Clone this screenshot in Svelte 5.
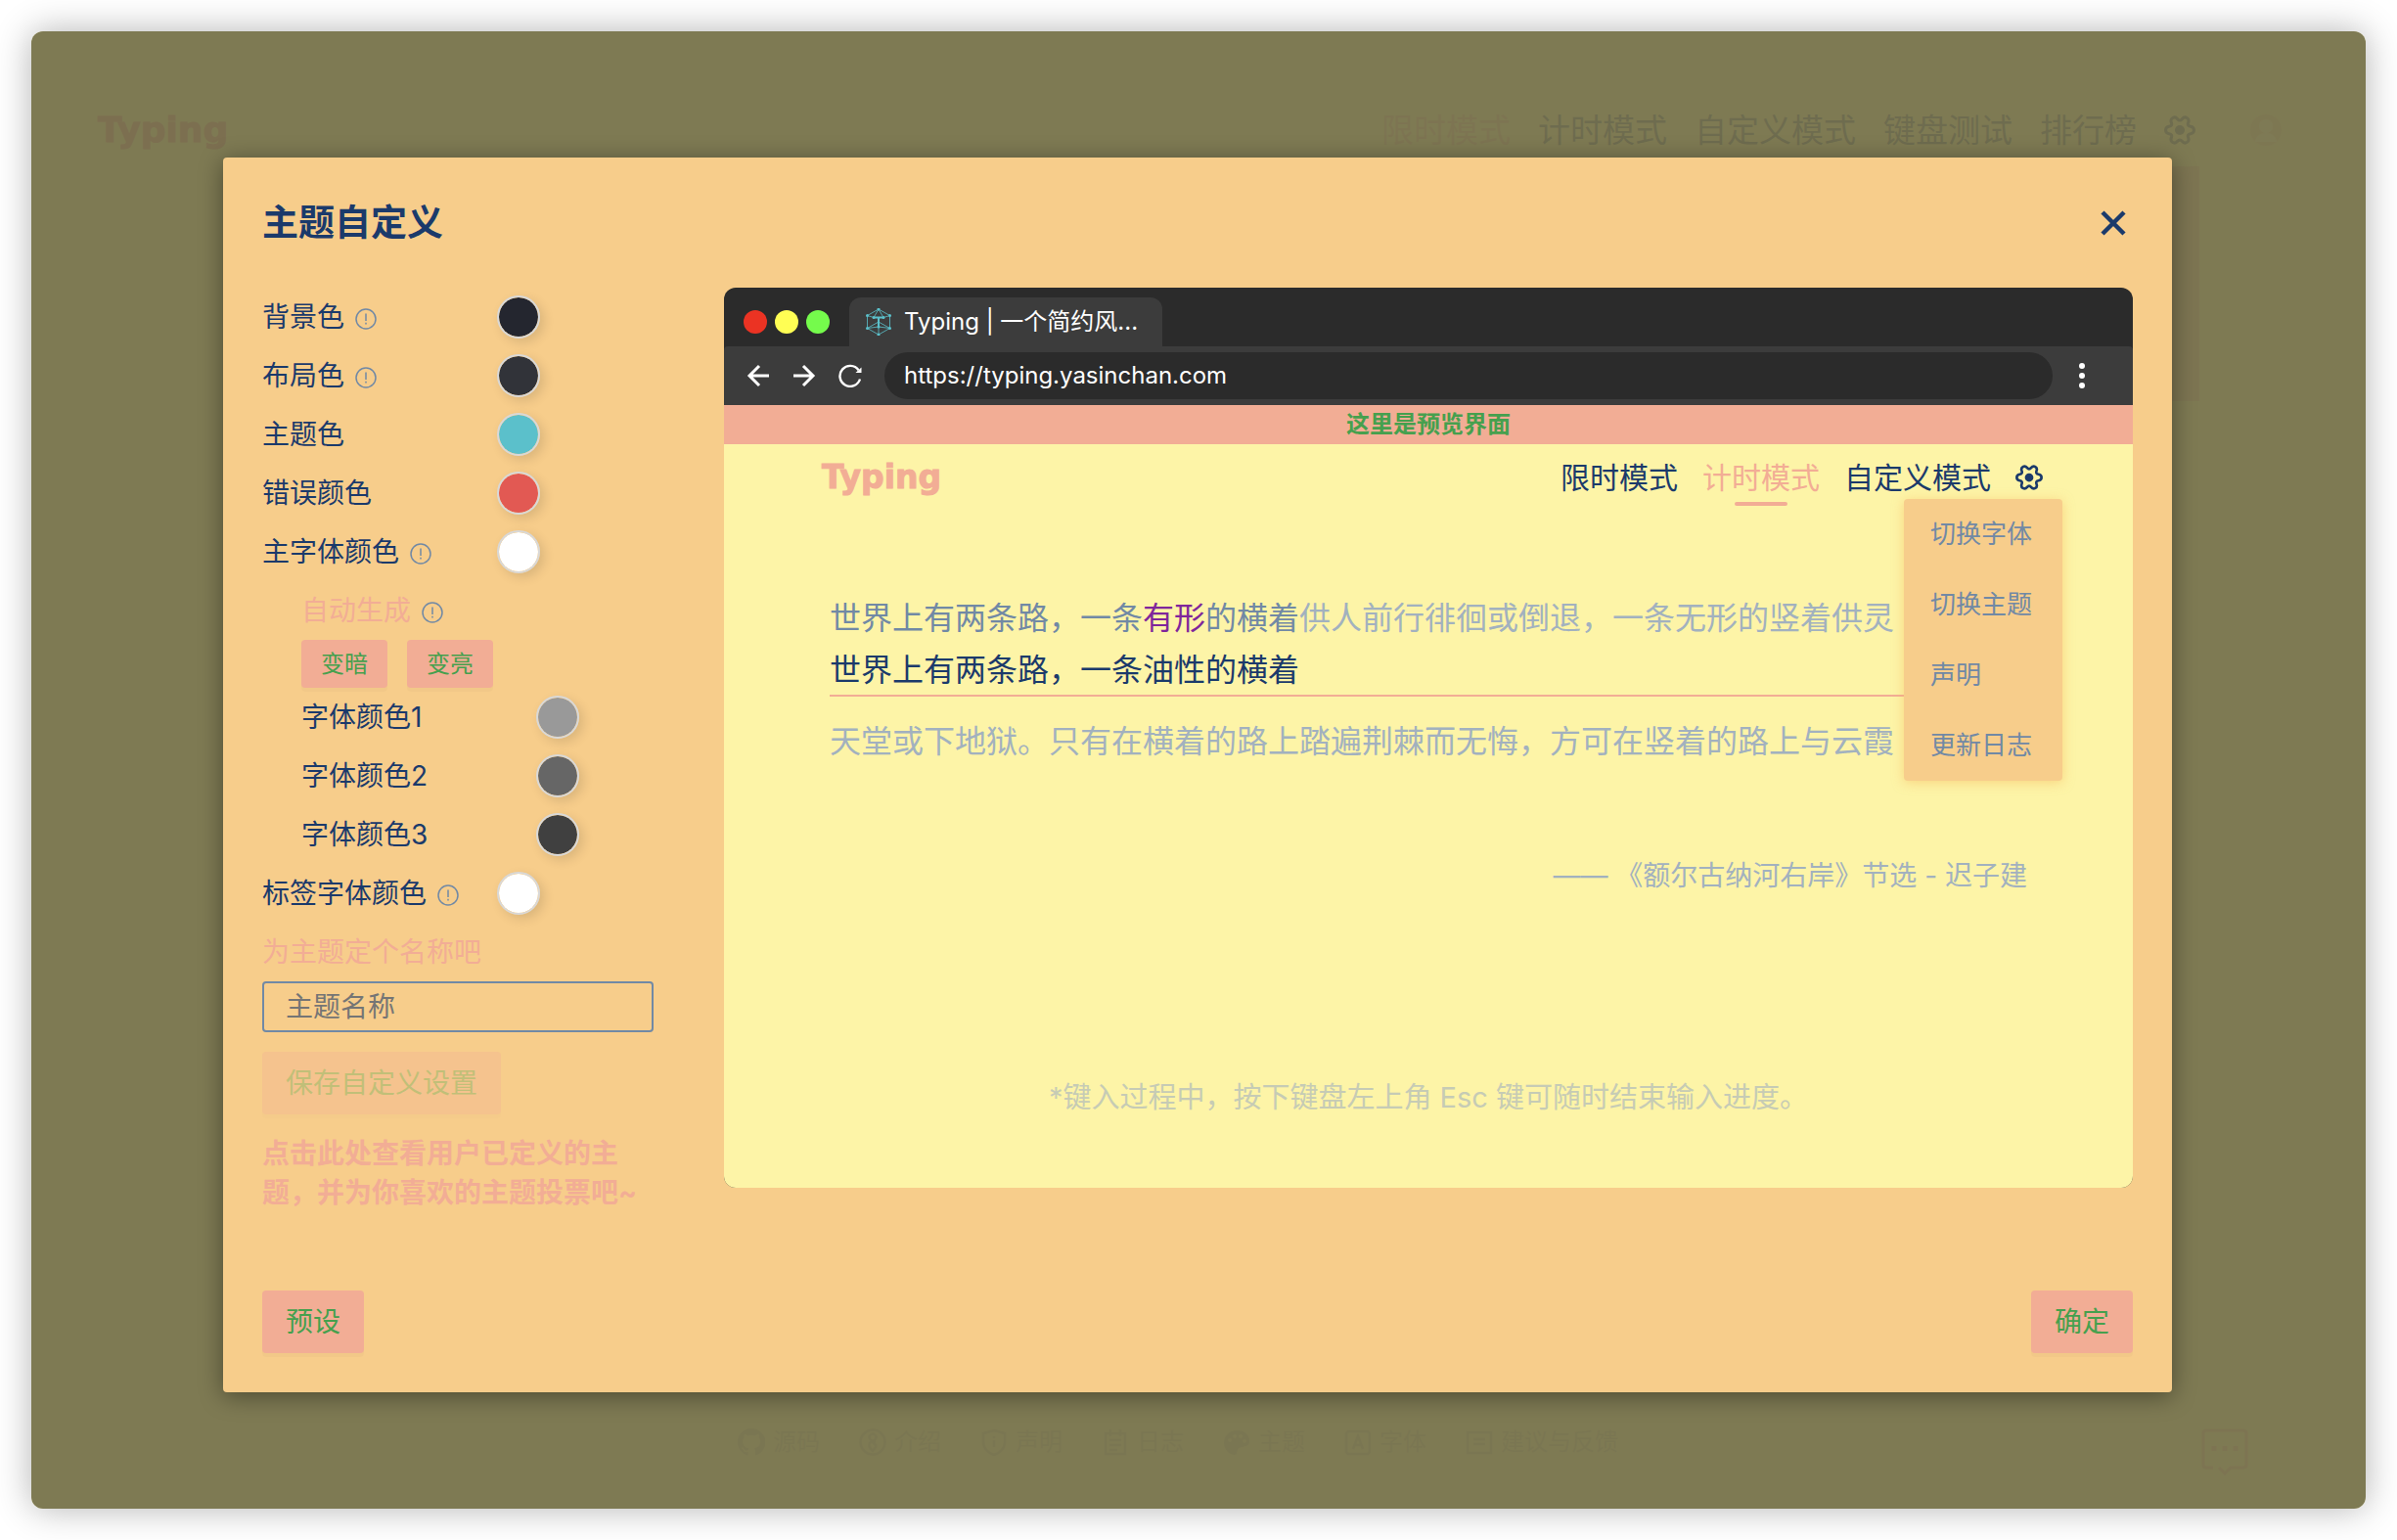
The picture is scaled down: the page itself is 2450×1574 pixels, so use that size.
<script lang="ts">
    //#region <Data>
    let colors = [
        { id: 'bg', label: '背景色', tip: true, sub: false, value: '#24262f' },
        { id: 'layout', label: '布局色', tip: true, sub: false, value: '#313339' },
        { id: 'theme', label: '主题色', tip: false, sub: false, value: '#5bc0cb' },
        { id: 'error', label: '错误颜色', tip: false, sub: false, value: '#e25953' },
        { id: 'main', label: '主字体颜色', tip: true, sub: false, value: '#ffffff' },
    ];
    let fontColors = [
        { id: 'font1', label: '字体颜色1', tip: false, sub: true, value: '#999999' },
        { id: 'font2', label: '字体颜色2', tip: false, sub: true, value: '#666666' },
        { id: 'font3', label: '字体颜色3', tip: false, sub: true, value: '#404040' },
    ];
    let labelColors = [
        { id: 'label', label: '标签字体颜色', tip: true, sub: false, value: '#ffffff' },
    ];

    const navs = ['限时模式', '计时模式', '自定义模式', '键盘测试', '排行榜'];
    const previewNavs = ['限时模式', '计时模式', '自定义模式'];
    const menus = ['切换字体', '切换主题', '声明', '更新日志'];
    const links = [
        { icon: 'github', text: '源码' },
        { icon: 'intro', text: '介绍' },
        { icon: 'shield', text: '声明' },
        { icon: 'log', text: '日志' },
        { icon: 'palette', text: '主题' },
        { icon: 'font', text: '字体' },
        { icon: 'feedback', text: '建议与反馈' },
    ];
    //#endregion </Data>

    let themeName = '';

    // six rounded teeth: two outer points and one inner point each, smoothed through the midpoints
    function getGearPath() {
        const points: number[][] = [];
        for (let i = 0; i < 6; i++) {
            for (const [offset, r] of [[-12, 14.8], [12, 14.8], [30, 8.5]]) {
                const a = ((i * 60 + offset) * Math.PI) / 180;
                points.push([16 + r * Math.cos(a), 16 + r * Math.sin(a)]);
            }
        }
        const mid = (a: number[], b: number[]) => `${(a[0] + b[0]) / 2} ${(a[1] + b[1]) / 2}`;
        let d = `M${mid(points[17], points[0])}`;
        points.forEach((p, i) => {
            d += `Q${p[0]} ${p[1]} ${mid(p, points[(i + 1) % 18])}`;
        });
        return d + 'Z';
    }
    const gearPath = getGearPath();
</script>

{#snippet gear()}
    <svg class="gear" viewBox="0 0 32 32" aria-hidden="true">
        <path d={gearPath} fill="none" stroke="currentColor" stroke-width="3" />
        <circle cx="16" cy="16" r="5" fill="currentColor" />
    </svg>
{/snippet}

{#snippet tip()}
    <svg class="tip" viewBox="0 0 22 22" aria-hidden="true">
        <circle cx="11" cy="11" r="10" fill="none" stroke="currentColor" stroke-width="1.5" />
        <path d="M11 5.500V13M11 14.800V16.500" stroke="currentColor" stroke-width="1.500" />
    </svg>
{/snippet}

{#snippet colorRow(item)}
    <div class="row" class:sub={item.sub}>
        <label class="row-label" for={item.id}>
            {item.label}
            {#if item.tip}{@render tip()}{/if}
        </label>
        <input class="swatch" type="color" id={item.id} bind:value={item.value}>
    </div>
{/snippet}

<div class="app">
    <!-- Page behind the dialog -->
    <div class="page">
        <header class="page-header">
            <a class="logo page-logo" href="#home">Typing</a>
            <nav class="page-nav">
                {#each navs as nav, i}
                    <a href="#nav{i}" class:active={i === 0}>{nav}</a>
                {/each}
                {@render gear()}
                <svg class="avatar" viewBox="0 0 32 32" aria-hidden="true">
                    <circle cx="16" cy="16" r="16" fill="#e9a58c" />
                    <circle cx="16" cy="12" r="7" fill="#fff" />
                    <path d="M5 28C6 16 26 16 27 28Z" fill="#fff" />
                </svg>
            </nav>
            <div class="page-menu"></div>
        </header>

        <footer class="page-footer">
            {#each links as link}
                <a href="#{link.icon}">
                    <svg viewBox="0 0 28 28" fill="none" stroke="currentColor" stroke-width="2.5" aria-hidden="true">
                        {#if link.icon === 'github'}
                            <path fill="currentColor" stroke="none" d="M14 0a14 14 0 0 0-4.400 27.300c.7.100 1-.3 1-.7v-2.500c-4 .9-4.800-1.700-4.800-1.700-.6-1.600-1.500-2-1.500-2-1.300-.9.1-.9.1-.9 1.400.1 2.200 1.500 2.200 1.500 1.200 2.100 3.200 1.500 4.100 1.100.1-.9.500-1.500.9-1.900-3.100-.3-6.400-1.500-6.400-6.900 0-1.500.5-2.800 1.400-3.800-.1-.3-.6-1.700.2-3.700 0 0 1.200-.4 3.900 1.400a13.500 13.500 0 0 1 7 0c2.700-1.800 3.900-1.400 3.900-1.400.8 2 .3 3.400.2 3.700.9 1 1.400 2.300 1.400 3.800 0 5.400-3.300 6.600-6.400 6.900.5.4 1 1.300 1 2.600v3.800c0 .4.300.8 1 .7A14 14 0 0 0 14 0z" />
                        {:else if link.icon === 'intro'}
                            <circle cx="14" cy="14" r="12.500" />
                            <circle cx="14" cy="9" r="3.500" />
                            <path d="M17 13c-7 0-8 4-5 8l2 2 4-5M13 13l5 5" />
                        {:else if link.icon === 'shield'}
                            <path d="M14 2 25 5V14C25 20 20 25 14 27 8 25 3 20 3 14V5Z" />
                            <path d="M14 8V10M14 12V19" />
                        {:else if link.icon === 'log'}
                            <path d="M4 5H24V26H4ZM9 1V8M19 1V8M8 12H20M8 17H20M8 22H16" />
                        {:else if link.icon === 'palette'}
                            <path fill="currentColor" stroke="none" fill-rule="evenodd" d="M14 2C6 2 1 8 1 15S7 27 12 27C15 27 14 22 16 20S27 20 27 13 21 2 14 2ZM7 10a2 2 0 1 0 .1 0ZM12 6a2 2 0 1 0 .1 0ZM18 6a2 2 0 1 0 .1 0ZM22 11a2 2 0 1 0 .1 0Z" />
                        {:else if link.icon === 'font'}
                            <rect x="2" y="3" width="24" height="23" rx="3" />
                            <path d="M9 21 14 8 19 21M11 17H17" />
                        {:else}
                            <path d="M2 4H26V25H2ZM8 11H20M8 16H20" />
                        {/if}
                    </svg>
                    {link.text}
                </a>
            {/each}
            <button class="chat" aria-label="反馈">
                <svg viewBox="0 0 48 48" fill="none" stroke="currentColor" stroke-width="3" aria-hidden="true">
                    <path d="M12 40H5Q2 40 2 37V5Q2 2 5 2H43Q46 2 46 5V37Q46 40 43 40H30L24 46 18 40" />
                    <path d="M13 18v5M24 18v5M35 18v5" stroke-width="5" />
                </svg>
            </button>
        </footer>
    </div>

    <!-- Dialog -->
    <div class="overlay">
        <section class="dialog" role="dialog" aria-labelledby="dialog-title">
            <header class="dialog-header">
                <h3 id="dialog-title">主题自定义</h3>
                <button class="close" aria-label="关闭">
                    <svg viewBox="0 0 26 26" aria-hidden="true">
                        <path d="M2 2 24 24M24 2 2 24" stroke="currentColor" stroke-width="4.500" />
                    </svg>
                </button>
            </header>

            <div class="dialog-body">
                <form class="settings" on:submit|preventDefault>
                    {#each colors as item}{@render colorRow(item)}{/each}
                    <div class="row sub">
                        <span class="row-label auto">自动生成 {@render tip()}</span>
                    </div>
                    <div class="auto-buttons">
                        <button type="button" class="btn small">变暗</button>
                        <button type="button" class="btn small">变亮</button>
                    </div>
                    {#each fontColors as item}{@render colorRow(item)}{/each}
                    {#each labelColors as item}{@render colorRow(item)}{/each}
                    <label class="name-label" for="theme-name">为主题定个名称吧</label>
                    <input class="name-input" type="text" id="theme-name" placeholder="主题名称" bind:value={themeName}>
                    <button class="btn save" disabled={!themeName}>保存自定义设置</button>
                    <a class="vote" href="#vote">点击此处查看用户已定义的主题，并为你喜欢的主题投票吧~</a>
                </form>

                <!-- Browser preview -->
                <div class="browser">
                    <div class="tab-bar">
                        <span class="light red"></span>
                        <span class="light yellow"></span>
                        <span class="light green"></span>
                        <div class="tab">
                            <svg class="favicon" viewBox="0 0 28 28" fill="none" stroke="#5bc0cb" aria-hidden="true">
                                <path stroke-width="1" opacity="0.8" d="M14 1 25.500 7.500V20.500L14 27 2.500 20.500V7.500ZM14 1 9 9.500M14 1 19 9.500M2.500 7.500 9 9.500M25.500 7.500 19 9.500M14 14 2.500 20.500M14 14 25.500 20.500M2.500 20.500 14 19 25.500 20.500M14 19V27" />
                                <path stroke-width="2" d="M9 9.500H19M14 9.500V19" />
                                <path stroke-width="3" stroke-linecap="round" d="M14 1h.01M25.500 7.500h.01M25.500 20.500h.01M14 27h.01M2.500 20.500h.01M2.500 7.500h.01M9 9.500h.01M19 9.500h.01M14 19h.01" />
                            </svg>
                            <span>Typing | 一个简约风...</span>
                        </div>
                    </div>
                    <div class="tool-bar">
                        <svg viewBox="0 0 24 24" aria-hidden="true"><path d="M23 12H3M13 2 3 12 13 22" /></svg>
                        <svg viewBox="0 0 24 24" aria-hidden="true"><path d="M1 12H21M11 2 21 12 11 22" /></svg>
                        <svg viewBox="0 0 24 24" aria-hidden="true">
                            <path class="thin" d="M22 15.500A10.500 10.500 0 1 1 20.500 6.200" />
                            <path class="head" d="M23.500 3.500V9H17.500Z" />
                        </svg>
                        <div class="url">https://typing.yasinchan.com</div>
                        <div class="dots"><i></i><i></i><i></i></div>
                    </div>
                    <div class="banner">这里是预览界面</div>
                    <div class="preview">
                        <header class="preview-header">
                            <span class="logo">Typing</span>
                            <nav class="preview-nav">
                                {#each previewNavs as nav, i}
                                    <a href="#preview{i}" class:active={i === 1}>{nav}</a>
                                {/each}
                                <div class="setting">
                                    {@render gear()}
                                    <ul class="menu">
                                        {#each menus as menu}<li>{menu}</li>{/each}
                                    </ul>
                                </div>
                            </nav>
                        </header>
                        <div class="article">
                            <p class="line"><span class="done">世界上有两条路，一条<span class="wrong">有形</span>的横着</span>供人前行徘徊或倒退，一条无形的竖着供灵</p>
                            <p class="line typed">世界上有两条路，一条油性的横着</p>
                            <p class="line next">天堂或下地狱。只有在横着的路上踏遍荆棘而无悔，方可在竖着的路上与云霞</p>
                            <p class="from">—— 《额尔古纳河右岸》节选 - 迟子建</p>
                            <p class="hint">*键入过程中，按下键盘左上角 Esc 键可随时结束输入进度。</p>
                        </div>
                    </div>
                </div>
            </div>

            <footer class="dialog-footer">
                <button class="btn">预设</button>
                <button class="btn">确定</button>
            </footer>
        </section>
    </div>
</div>

<style>
    :global(body) {
        margin: 0;
        background: #fff;
    }

    .app {
        --bg: #fdf4a7;
        --panel: #f7cd8b;
        --pink: #f2ad95;
        --green: #46a04e;
        --main: #1b3a6b;
        --second: #7189a5;
        --third: #a2b1bf;
        display: grid;
        min-height: calc(100vh - 64px);
        margin: 32px;
        border-radius: 12px;
        box-shadow: 0 0 36px rgba(0, 0, 0, 0.3);
        font-family: Inter, "Noto Sans CJK SC", sans-serif;
        font-size: 28px;
        line-height: 40px;
        color: var(--main);
    }

    .app *,
    .app {
        box-sizing: border-box;
    }

    a {
        color: inherit;
        text-decoration: none;
    }

    p, h3, ul {
        margin: 0;
        padding: 0;
    }

    svg {
        display: block;
        flex: none;
    }

    button,
    input {
        font: inherit;
    }

    .logo {
        font-family: "DejaVu Sans", sans-serif;
        font-weight: 700;
        font-size: 33px;
        color: var(--pink);
        -webkit-text-stroke: 1px var(--pink);
    }

    .gear {
        width: 28px;
        height: 28px;
    }

    /* page */
    .page,
    .overlay {
        grid-area: 1 / 1;
        border-radius: 12px;
    }

    .page {
        display: flex;
        flex-direction: column;
        justify-content: space-between;
        background: var(--bg);
    }

    .page-header {
        position: relative;
        display: flex;
        align-items: center;
        justify-content: space-between;
        padding: 81px 86px 0 68px;
    }

    .page-logo {
        font-size: 36px;
        opacity: 0.3;
    }

    .page-nav {
        display: flex;
        align-items: center;
        gap: 28px;
        font-size: 33px;
    }

    .page-nav a,
    .page-nav .gear {
        opacity: 0.14;
    }

    .page-nav .gear {
        width: 32px;
        height: 32px;
    }

    .page-nav .active {
        color: var(--pink);
    }

    .avatar {
        width: 32px;
        height: 32px;
        margin-left: 28px;
        opacity: 0.05;
    }

    .page-menu {
        position: absolute;
        top: 138px;
        right: 170px;
        width: 160px;
        height: 240px;
        background: var(--pink);
        opacity: 0.12;
    }

    .page-footer {
        position: relative;
        display: flex;
        justify-content: center;
        gap: 40px;
        padding: 0 42px 48px 0;
        font-size: 24px;
    }

    .page-footer a {
        display: flex;
        align-items: center;
        gap: 8px;
        opacity: 0.03;
    }

    .page-footer a svg {
        width: 28px;
        height: 28px;
    }

    .chat {
        position: absolute;
        right: 120px;
        bottom: 34px;
        padding: 0;
        border: none;
        background: none;
        color: var(--pink);
        opacity: 0.15;
    }

    .chat svg {
        width: 48px;
        height: 48px;
    }

    /* dialog */
    .overlay {
        z-index: 1;
        padding: 129px 198px 119px 196px;
        background: rgba(0, 0, 0, 0.5);
    }

    .dialog {
        padding: 40px;
        border-radius: 4px;
        background: var(--panel);
        box-shadow: 0 4px 24px rgba(0, 0, 0, 0.4);
    }

    .dialog-header {
        display: flex;
        align-items: center;
        justify-content: space-between;
        height: 54px;
        margin-bottom: 39px;
    }

    .dialog-header h3 {
        font-size: 37px;
    }

    .close {
        padding: 0 7px;
        border: none;
        background: none;
        color: var(--main);
    }

    .close svg {
        width: 26px;
        height: 26px;
    }

    .dialog-body {
        display: flex;
        align-items: flex-start;
        gap: 72px;
    }

    .settings {
        flex: none;
        width: 400px;
    }

    .row {
        display: flex;
        align-items: center;
        height: 60px;
    }

    .sub,
    .auto-buttons {
        padding-left: 40px;
    }

    .row-label {
        display: flex;
        align-items: center;
        gap: 11px;
        width: 240px;
    }

    .tip {
        width: 22px;
        height: 22px;
        margin-top: 4px;
        color: var(--second);
    }

    .auto {
        color: var(--pink);
    }

    .swatch {
        appearance: none;
        width: 44px;
        height: 44px;
        padding: 0;
        border: 2px solid #d8d8d8;
        border-radius: 50%;
        background: none;
        box-shadow: 4px 4px 12px rgba(0, 0, 0, 0.12);
        overflow: hidden;
    }

    .swatch::-webkit-color-swatch-wrapper {
        padding: 0;
    }

    .swatch::-webkit-color-swatch {
        border: none;
        border-radius: 50%;
    }

    .btn {
        height: 64px;
        padding: 0 24px;
        border: none;
        border-radius: 4px;
        background: var(--pink);
        color: var(--green);
        box-shadow: 0 4px 0 rgba(0, 0, 0, 0.02);
    }

    .btn.small {
        height: 49px;
        padding: 0 20px;
        font-size: 24px;
    }

    .auto-buttons {
        display: flex;
        gap: 20px;
    }

    .name-label {
        display: block;
        line-height: 60px;
        color: var(--pink);
    }

    .name-input {
        display: block;
        width: 100%;
        height: 52px;
        padding: 0 22px;
        border: 2px solid var(--second);
        border-radius: 4px;
        background: none;
        color: var(--main);
        outline: none;
    }

    .name-input::placeholder {
        color: #757575;
    }

    .save {
        display: block;
        margin: 20px 0;
    }

    .save:disabled {
        opacity: 0.3;
    }

    .vote {
        display: block;
        font-weight: 700;
        color: var(--pink);
    }

    .dialog-footer {
        display: flex;
        justify-content: space-between;
        margin-top: 80px;
    }

    /* browser */
    .browser {
        flex: 1;
        min-width: 0;
        border-radius: 12px;
        overflow: hidden;
        background: #2b2b2b;
        color: #fff;
        font-size: 24px;
    }

    .tab-bar {
        display: flex;
        align-items: center;
        gap: 8px;
        height: 60px;
        padding: 10px 20px 0;
    }

    .light {
        width: 24px;
        height: 24px;
        border-radius: 50%;
    }

    .red {
        background: #eb3323;
    }

    .yellow {
        background: #fffe54;
    }

    .green {
        background: #75fb4c;
    }

    .tab {
        display: flex;
        align-items: center;
        gap: 12px;
        width: 320px;
        height: 50px;
        margin-left: 12px;
        padding: 0 16px;
        border-radius: 12px 12px 0 0;
        background: #3c3c3c;
        white-space: nowrap;
    }

    .favicon {
        width: 28px;
        height: 28px;
    }

    .tool-bar {
        display: flex;
        align-items: center;
        gap: 23px;
        height: 60px;
        padding: 0 49px 0 23px;
        border-radius: 4px 4px 0 0;
        background: #3c3c3c;
    }

    .tool-bar svg {
        width: 24px;
        height: 24px;
        fill: none;
        stroke: #fff;
        stroke-width: 3;
    }

    .tool-bar .thin {
        stroke-width: 2.4;
    }

    .tool-bar .head {
        fill: #fff;
        stroke: none;
    }

    .url {
        flex: 1;
        margin-right: 4px;
        padding: 0 20px;
        border-radius: 24px;
        background: #2b2b2b;
        line-height: 48px;
    }

    .dots {
        display: grid;
        gap: 4px;
    }

    .dots i {
        width: 6px;
        height: 6px;
        border-radius: 50%;
        background: #fff;
    }

    .banner {
        background: var(--pink);
        color: var(--green);
        font-weight: 700;
        text-align: center;
    }

    .preview {
        padding-bottom: 72px;
        background: var(--bg);
        font-size: 28px;
    }

    .preview-header {
        display: flex;
        align-items: center;
        justify-content: space-between;
        height: 68px;
        padding: 0 92px 0 100px;
    }

    .preview-nav {
        display: flex;
        align-items: center;
        gap: 25px;
        font-size: 30px;
        color: var(--main);
    }

    .preview-nav a {
        position: relative;
    }

    .preview-nav .active {
        color: var(--pink);
    }

    .preview-nav .active::after {
        content: "";
        position: absolute;
        top: 45px;
        left: calc(50% - 27px);
        width: 54px;
        height: 4px;
        border-radius: 2px;
        background: var(--pink);
    }

    .setting {
        position: relative;
    }

    .menu {
        position: absolute;
        top: 36px;
        right: -20px;
        z-index: 1;
        width: 162px;
        border-radius: 4px;
        background: var(--panel);
        box-shadow: 0 2px 12px rgba(247, 180, 90, 0.5);
        list-style: none;
        font-size: 26px;
        line-height: 72px;
        color: var(--second);
    }

    .menu li {
        padding-left: 27px;
        white-space: nowrap;
    }

    .article {
        padding: 84px 108px 0;
        color: var(--third);
    }

    .line {
        font-size: 32px;
        line-height: 52px;
        white-space: nowrap;
    }

    .done {
        color: var(--second);
    }

    .wrong {
        color: #7f269b;
    }

    .typed {
        padding-top: 2px;
        border-bottom: 2px solid var(--pink);
        line-height: 50px;
        color: var(--main);
    }

    .next {
        margin-top: 20px;
    }

    .from {
        margin-top: 91px;
        text-align: right;
    }

    .hint {
        margin-top: 187px;
        font-size: 29px;
        text-align: center;
        opacity: 0.6;
    }
</style>
